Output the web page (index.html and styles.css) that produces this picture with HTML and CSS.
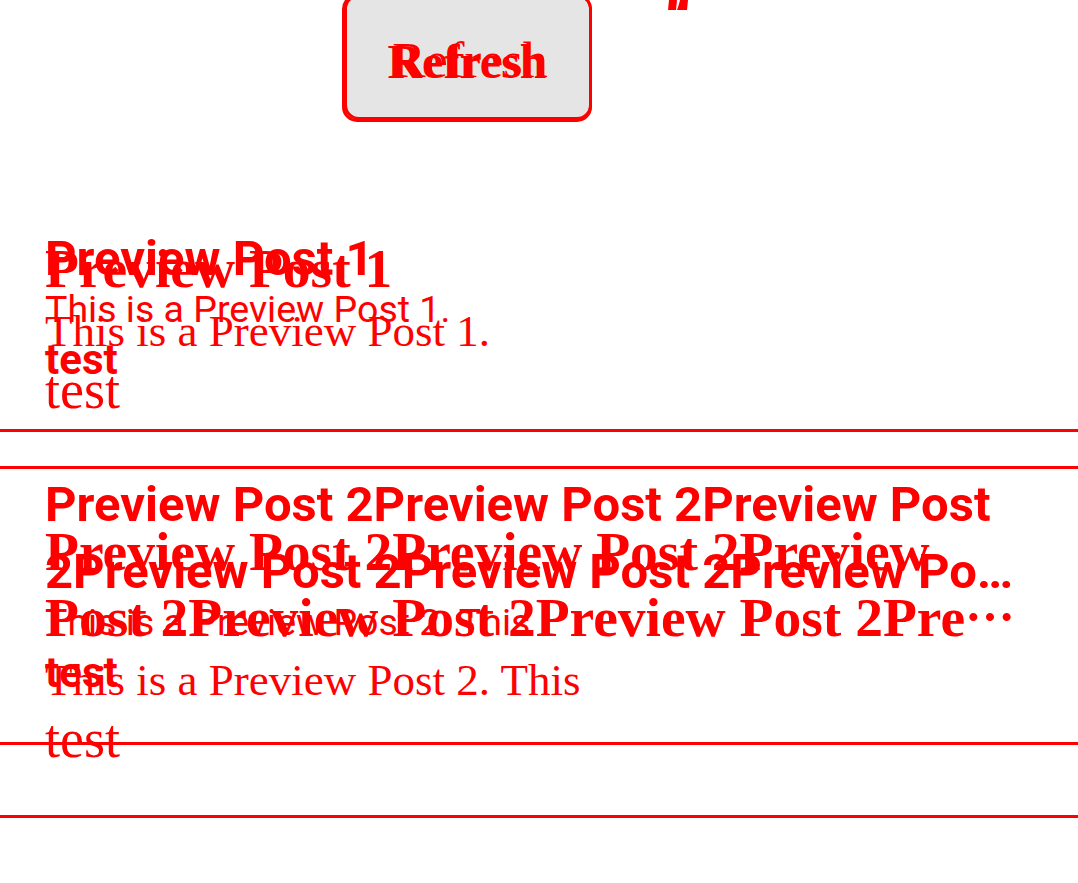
FILE: index.html
```html
<!DOCTYPE html>
<html lang="en">
<head>
<meta charset="utf-8">
<title>Preview Posts</title>
<link rel="stylesheet" href="styles.css">
</head>
<body>
<div class="stage">
  <div class="layer layer-serif">
    <header class="topbar">
      <button class="refresh" type="button">Refresh</button>
    </header>
    <ul class="posts">
      <li class="post">
        <h2 class="post-title">Preview Post 1</h2>
        <p class="post-body">This is a Preview Post 1.</p>
        <span class="post-tag">test</span>
      </li>
      <li class="post">
        <h2 class="post-title"><span class="line">Preview Post 2Preview Post 2Preview</span><span class="line">Post 2Preview Post 2Preview Post 2Pre<span class="dots" lang="ja">…</span></span></h2>
        <p class="post-body">This is a Preview Post 2. This</p>
        <span class="post-tag">test</span>
      </li>
    </ul>
  </div>
  <div class="layer layer-sans">
    <header class="topbar">
      <button class="refresh" type="button">Refresh</button>
      <svg class="mark" width="20" height="10" viewBox="0 0 20 10" aria-hidden="true">
        <polygon points="1,0 9,0 8,10 0,10" fill="#ff0000"/>
        <polygon points="12,0 20,0 19,10 9,10 11,4" fill="#ff0000"/>
      </svg>
    </header>
    <ul class="posts">
      <li class="post">
        <h2 class="post-title">Preview Post 1</h2>
        <p class="post-body">This is a Preview Post 1.</p>
        <span class="post-tag">test</span>
      </li>
      <li class="post">
        <h2 class="post-title"><span class="line">Preview Post 2Preview Post 2Preview Post</span><span class="line">2Preview Post 2Preview Post 2Preview Po…</span></h2>
        <p class="post-body">This is a Preview Post 2. This</p>
        <span class="post-tag">test</span>
      </li>
    </ul>
  </div>
</div>
</body>
</html>
```
FILE: styles.css
```css
* {
  box-sizing: border-box;
}

html,
body {
  margin: 0;
  padding: 0;
  background: #ffffff;
  overflow: hidden;
}

body {
  color: #ff0000;
  height: 883px;
}

.stage {
  display: grid;
}

.layer {
  grid-area: 1 / 1;
  min-width: 0;
}

.topbar {
  height: 186px;
  display: flex;
  align-items: flex-start;
  padding-left: 342px;
}

.refresh {
  margin: -6px 0 0 0;
  width: 250px;
  height: 128px;
  padding: 0;
  border: 3px solid #ff0000;
  border-radius: 15px;
  background: #e5e5e5;
  color: #ff0000;
  display: flex;
  align-items: center;
  justify-content: center;
  font-family: "Liberation Serif", serif;
}

.layer-serif .refresh {
  font-size: 48px;
  font-weight: 700;
  padding-top: 6px;
}

.layer-sans .refresh {
  margin-left: 2px;
  width: 248px;
  height: 126px;
  background: transparent;
  font-size: 50px;
  font-weight: 400;
  padding-left: 4px;
  padding-top: 5px;
}

.mark {
  display: block;
  margin-left: 76px;
  margin-top: 0;
}

.posts {
  list-style: none;
  margin: 0;
  padding: 0;
}

.post {
  border-bottom: 3px solid #ff0000;
  padding-left: 45px;
  padding-right: 63px;
}

.post-title {
  margin: 0;
  white-space: nowrap;
}

.post-title .line {
  display: block;
}

.post-body {
  margin: 0;
  white-space: nowrap;
}

.post-tag {
  display: block;
}

/* sans layer */
.layer-sans .post {
  padding-top: 39px;
  padding-bottom: 44px;
  font-family: Roboto, "Liberation Sans", sans-serif;
}

.layer-sans .post-title {
  font-size: 49px;
  line-height: 67px;
  font-weight: 700;
}

.layer-sans .post-body {
  font-size: 37.5px;
  line-height: 35px;
  font-weight: 400;
}

.layer-sans .post-tag {
  margin-top: 8px;
  font-size: 42px;
  line-height: 50px;
  font-weight: 700;
}

/* serif layer */
.layer-serif .post {
  padding-top: 50px;
  padding-bottom: 46px;
  font-family: "Liberation Serif", serif;
}

.layer-serif .post-title {
  font-size: 55.5px;
  line-height: 66px;
  font-weight: 700;
}

.layer-serif .post-title .dots {
  font-family: "Noto Sans CJK JP", "Noto Sans CJK SC", sans-serif;
  font-size: 50px;
  font-weight: 700;
  line-height: 0;
}

.layer-serif .post-body {
  font-size: 45px;
  line-height: 58px;
  font-weight: 400;
}

.layer-serif .post-tag {
  font-size: 54px;
  line-height: 60px;
  font-weight: 400;
}
```
